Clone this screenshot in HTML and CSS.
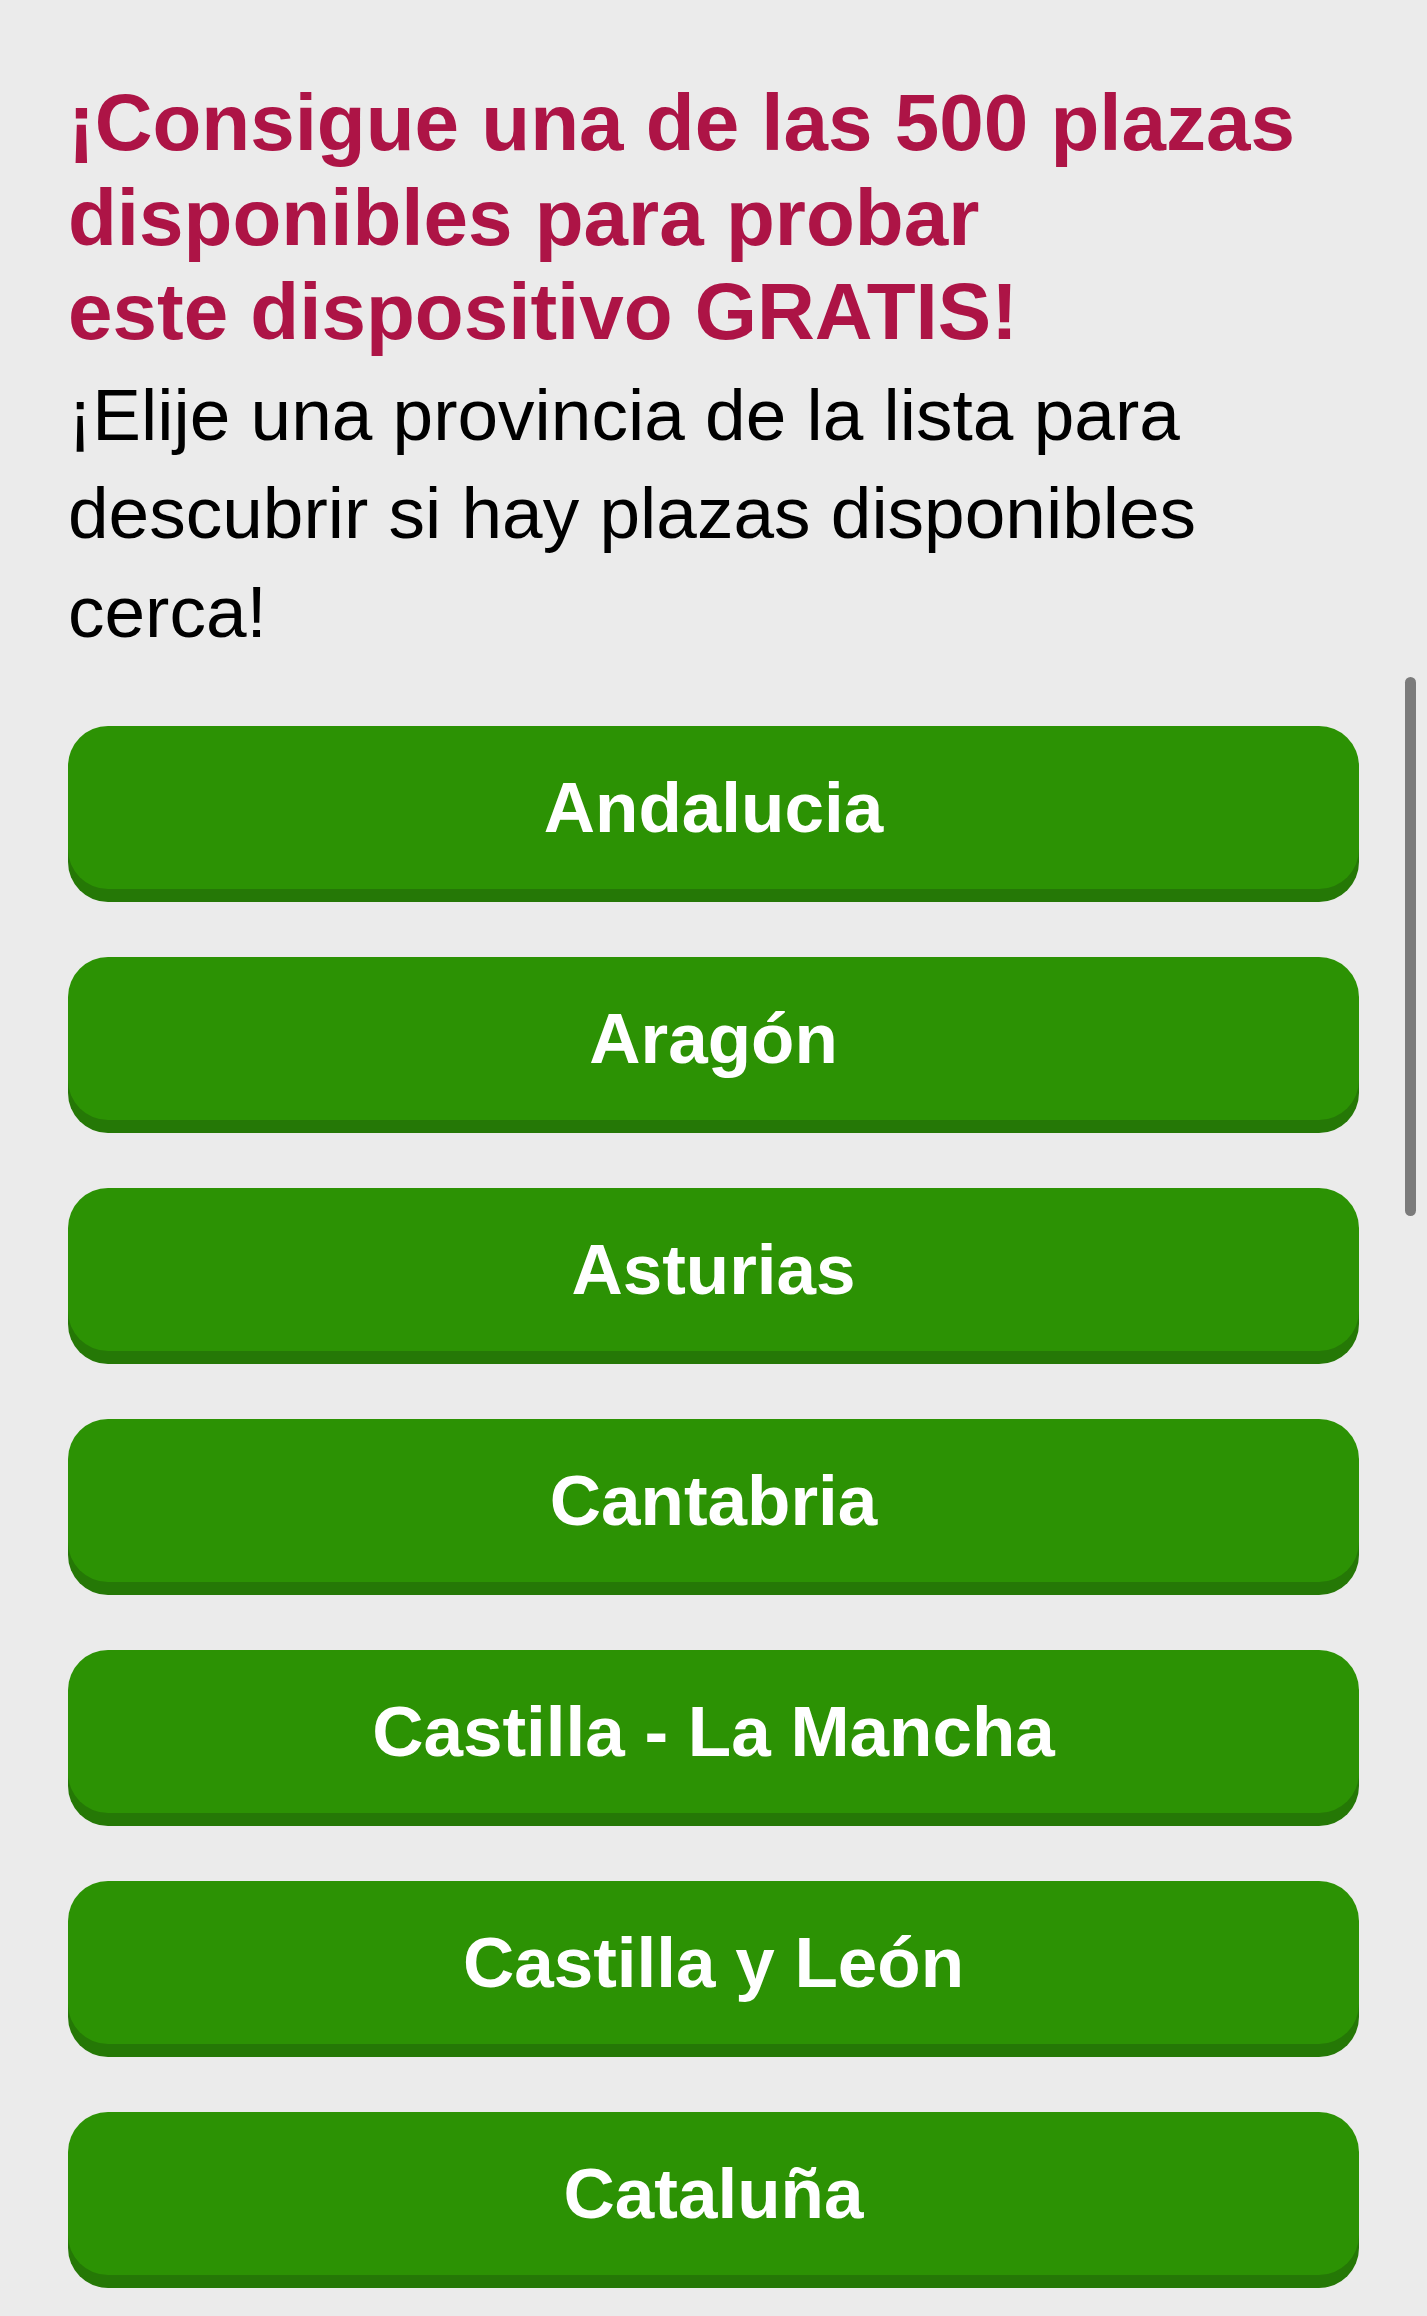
FILE: index.html
```html
<!DOCTYPE html>
<html lang="es">
<head>
    <meta charset="UTF-8">
    <meta name="viewport" content="width=device-width, initial-scale=1.0">
    <title>Elige tu provincia</title>
    <link rel="stylesheet" href="styles.css">
</head>
<body>

<div class="container">
    <!-- Intro -->
    <h1 class="headline">¡Consigue una de las 500 plazas disponibles para probar<br>este dispositivo GRATIS!</h1>
    <p class="subline">¡Elije una provincia de la lista para descubrir si hay plazas disponibles cerca!</p>

    <!-- Province list -->
    <div class="province-list">
        <a class="province-btn" href="#">Andalucia</a>
        <a class="province-btn" href="#">Aragón</a>
        <a class="province-btn" href="#">Asturias</a>
        <a class="province-btn" href="#">Cantabria</a>
        <a class="province-btn" href="#">Castilla - La Mancha</a>
        <a class="province-btn" href="#">Castilla y León</a>
        <a class="province-btn" href="#">Cataluña</a>
    </div>
</div>

<!-- iOS style scroll indicator -->
<div class="scroll-thumb"></div>

</body>
</html>
```

FILE: styles.css
```css
html, body {
    margin: 0;
    padding: 0;
}

body {
    background-color: #ebebeb; /* Light grey page */
    color: #000;
    font-family: "Liberation Sans", Arial, sans-serif;
}

.container {
    padding: 76px 68px 39px 68px; /* bottom leaves room for the last shadow */
}

.headline {
    margin: 0;
    color: #ad1446; /* Crimson */
    font-size: 80px;
    font-weight: bold;
    line-height: 94.5px;
}

.subline {
    margin: 6px 0 0 0;
    font-size: 73px;
    line-height: 98.5px;
}

.province-list {
    display: flex;
    flex-direction: column;
    gap: 68px; /* 55px visible gap + 13px shadow */
    margin-top: 65px;
}

.province-btn {
    display: block;
    height: 163px;
    line-height: 163px;
    text-align: center;
    text-decoration: none;
    color: #fff;
    font-size: 71px;
    font-weight: bold;
    background-color: #2c9204; /* Green button */
    border-radius: 40px;
    box-shadow: 0 13px 0 #257806; /* Darker green base */
}

.scroll-thumb {
    position: absolute;
    top: 677px;
    left: 1405px;
    width: 11px;
    height: 539px;
    border-radius: 6px;
    background-color: #7b7b7b;
}
```
